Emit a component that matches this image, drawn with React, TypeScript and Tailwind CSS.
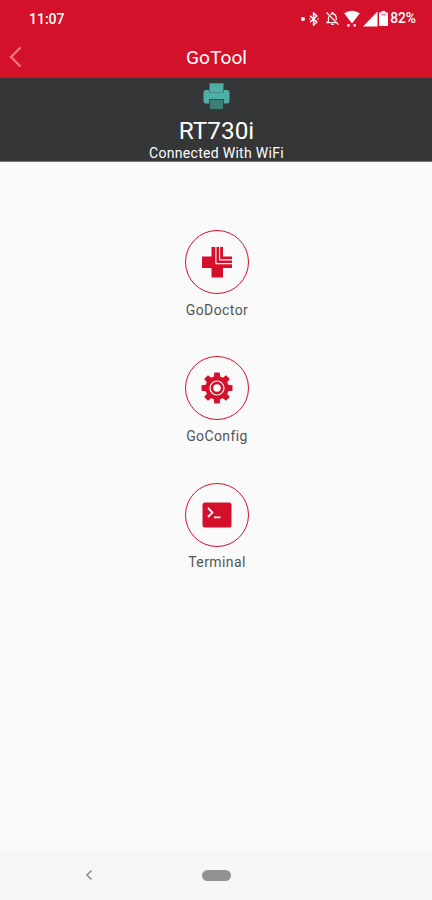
import type { ReactNode } from "react";

function StatusBar() {
  return (
    <div className="flex h-[37px] items-center justify-between pl-[29px] pr-[16px] text-[14px] leading-none font-medium">
      <span>11:07</span>
      <div className="flex items-center">
        <span className="mr-[4px] h-[4px] w-[4px] rounded-full bg-white" />
        {/* Bluetooth */}
        <svg width="10" height="14" viewBox="0 0 10 14" fill="none" stroke="currentColor" strokeWidth="1.5" className="mr-[6px]">
          <path d="M1 3.8 7.8 10 4.6 13V1l3.2 3L1 10.2" />
          <path d="M.4 7h.9M8.6 7h1" />
        </svg>
        {/* Muted bell */}
        <svg width="15" height="15" viewBox="0 0 15 15" fill="none" stroke="currentColor" strokeWidth="1.2" className="mr-[4px]">
          <path d="M4 5.3c-.5.8-.6 1.6-.6 2.5v2.4L2 11.6h9.5M5.6 3.5c.5-.4.9-.5 1.4-.6V1.8h1v1.1c2.2.4 3.2 2 3.2 4.4v2" />
          <path d="M1.5 1.5l12 12.2M6.2 13.3h2.6" />
        </svg>
        {/* Wifi */}
        <svg width="16" height="18" viewBox="0 0 16 18" fill="currentColor" className="mr-[3px]">
          <path d="M.2 3.2Q8-1.8 15.8 3.2L8 13.4z" />
          <path d="M3.3 14.2h2.4v2.4H3.3zM9.5 14.2h2.4v2.4H9.5z" />
        </svg>
        {/* Signal */}
        <svg width="15" height="16" viewBox="0 0 15 16" fill="currentColor" className="mr-[1px]">
          <path d="M14.5.5v15H0z" />
        </svg>
        {/* Battery */}
        <svg width="9" height="15" viewBox="0 0 9 15" fill="currentColor" className="mr-[2px]">
          <path d="M2.6 0h3.8v1.6h1.8q.8 0 .8.8v11.8q0 .8-.8.8H.8q-.8 0-.8-.8V2.4q0-.8.8-.8h1.8z" />
          <path d="M2.3 3.8h4.4" stroke="#d4112a" strokeWidth=".8" />
        </svg>
        <span className="text-[13.8px]">82%</span>
      </div>
    </div>
  );
}

function TitleBar() {
  return (
    <div className="grid h-[41px] grid-cols-[40px_1fr_40px] items-center">
      <button aria-label="Back" className="pb-[2px] pl-[9px] text-[#fb7884]">
        <svg width="13" height="22" viewBox="0 0 13 22" fill="none" stroke="currentColor" strokeWidth="2.2">
          <path d="M11.5 1.5 2 11l9.5 9.5" />
        </svg>
      </button>
      <h1 className="pt-px pl-px text-center text-[19.2px] leading-none">GoTool</h1>
    </div>
  );
}

function PrinterPanel() {
  return (
    <section className="flex h-[84px] flex-col items-center border-b border-[#777] bg-[#353638] pt-[5px] text-white">
      <svg width="27" height="27" viewBox="0 0 27 27">
        <path d="M3 7h21q2.5 0 2.5 3v8q0 2.5-2.5 2.5H3Q.5 20.5.5 18v-8Q.5 7 3 7z" fill="#4db0a6" />
        <path d="M6 0h15v9.5H6z" fill="#3f6c69" />
        <path d="M7 .5h13V9H7z" fill="#4db0a6" />
        <path d="M6 16h15v5H6z" fill="#35504f" />
        <path d="M7 17h13v9H7z" fill="#3d7f78" />
      </svg>
      <div className="mt-[7px] mb-px pl-px text-[24.3px] leading-[28px]">RT730i</div>
      <div className="pl-px text-[14px] leading-[14px] tracking-[0.3px]">Connected With WiFi</div>
    </section>
  );
}

function CrossIcon() {
  return (
    <svg width="32" height="32" viewBox="0 0 32 32">
      <path d="M10.5 1H22v9.5h9V22h-9v9.5H10.5V22H1V10.5h9.5z" fill="#d4112a" />
      <path d="M14.9 0v17.6H32M18.6 0v13.9H32" fill="none" stroke="#fafafa" strokeWidth="1.1" />
    </svg>
  );
}

function GearIcon() {
  return (
    <svg width="32" height="32" viewBox="-16 -16 32 32">
      <g fill="#d4112a">
        <circle r="11.7" />
        {[0, 45, 90, 135, 180, 225, 270, 315].map((angle) => (
          <path key={angle} d="M-3.2-10.5-2.7-15.5h5.4l.5 5z" transform={`rotate(${angle})`} />
        ))}
      </g>
      <circle r="7" fill="none" stroke="#fafafa" strokeWidth="1.2" />
      <circle r="3.8" fill="#fafafa" />
    </svg>
  );
}

function TerminalIcon() {
  return (
    <svg width="30" height="26" viewBox="0 0 30 26" fill="none">
      <rect x=".5" y=".5" width="29" height="25" rx="2.5" fill="#d4112a" />
      <path d="m6 6 4.5 4.5L6 15M12 15.3h6.500" stroke="#fafafa" strokeWidth="1.8" />
    </svg>
  );
}

function Tool({ label, children }: { label: string; children: ReactNode }) {
  return (
    <button className="flex h-[126.3px] flex-col items-center">
      <span className="flex h-[64px] w-[64px] items-center justify-center rounded-full border border-[#d4112a]">
        {children}
      </span>
      <span className="mt-[7.7px] pl-px text-[14px] leading-[16px] tracking-[0.4px] text-[#555]">{label}</span>
    </button>
  );
}

export default function App() {
  return (
    <div className="flex h-[900px] w-[432px] flex-col overflow-hidden bg-[#fafafa] font-[Roboto,sans-serif]">
      <header className="bg-[#d4112a] text-white">
        <StatusBar />
        <TitleBar />
      </header>
      <PrinterPanel />
      <main className="flex flex-1 flex-col items-center pt-[68px] pl-px">
        <Tool label="GoDoctor">
          <CrossIcon />
        </Tool>
        <Tool label="GoConfig">
          <GearIcon />
        </Tool>
        <Tool label="Terminal">
          <TerminalIcon />
        </Tool>
      </main>
      <nav className="flex h-[48px] items-center bg-[#f6f6f6] pb-[2px] pl-[85px] text-[#929292]">
        <svg width="8" height="12" viewBox="0 0 8 12" fill="none" stroke="currentColor" strokeWidth="1.7">
          <path d="M6.5 1.5 2 6l4.5 4.5" />
        </svg>
        <span className="ml-[109px] h-[11px] w-[29px] rounded-full bg-[#929292]" />
      </nav>
    </div>
  );
}
